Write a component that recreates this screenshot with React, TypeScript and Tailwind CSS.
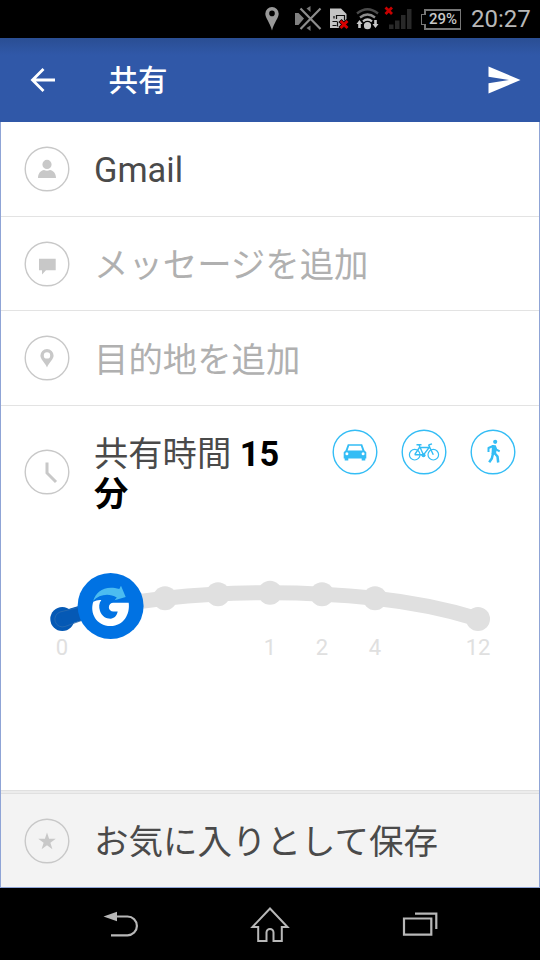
import { ReactNode } from "react";

const TRACK =
  "M62 619C96 608.5 131 602 165 598.3S235 592.7 270 592.7S340 594.5 375 598.3S444 608.5 478 619";

const STOPS = [
  { x: 165, y: 598.3 },
  { x: 218, y: 594.2 },
  { x: 270, y: 592.7, label: "1" },
  { x: 322, y: 594.2, label: "2" },
  { x: 375, y: 598.3, label: "4" },
  { x: 478, y: 619, label: "12" },
];

function CircleIcon({ children }: { children: ReactNode }) {
  return (
    <svg
      className="w-[46px] h-[46px] shrink-0"
      viewBox="-0.5 -0.5 46 46"
      fill="currentColor"
    >
      <circle
        cx="22.5"
        cy="22.5"
        r="21.8"
        fill="none"
        stroke="currentColor"
        strokeWidth="1.4"
      />
      {children}
    </svg>
  );
}

function StatusBar() {
  return (
    <div className="h-[38px] bg-black flex items-center justify-end pr-[9px] text-[#b8b8b8]">
      <svg className="w-[155px] h-[38px]" viewBox="260 0 155 38">
        <path
          fill="#999"
          fillRule="evenodd"
          d="M272 7a6.700 6.700 0 0 0-6.700 6.700c0 4.300 4.500 8.300 6.700 16.800c2.200-8.500 6.700-12.500 6.700-16.800A6.700 6.700 0 0 0 272 7zm0 3.600a2.800 2.800 0 1 1 0 5.600a2.800 2.800 0 0 1 0-5.600z"
        />
        <path fill="#808080" d="M295 13h3.500l5.500 5.500-5.500 6.500h-3.500z" />
        <path
          d="M300.500 8.500l20 20.500M320.500 8.500L300.500 29"
          stroke="#000"
          strokeWidth="4"
        />
        <path
          d="M300.500 8.500l20 20.500M320.500 8.500L300.500 29"
          stroke="#8c8c8c"
          strokeWidth="2.200"
        />
        <path fill="#777" d="M310.500 6v6l-4-3.500zM310.500 31v-5.500l-4 2.500z" />
        <path fill="#c4c4c4" d="M330 8.500h11l5.500 5.500v14h-16.500z" />
        <path
          d="M332.500 21.500h4.500M337.500 21.500v5M341.500 15.500h-5v3.500M341.500 15.500h3v5M332.500 25.500h4M334 16v2.500"
          stroke="#111"
          strokeWidth="1.200"
          fill="none"
        />
        <path d="M340 20.500l8 8M348 20.500l-8 8" stroke="#000" strokeWidth="4.500" />
        <path d="M340.500 21l7 7M347.500 21l-7 7" stroke="#d80000" strokeWidth="2.800" />
        <g fill="none" strokeWidth="2.300">
          <path d="M357 13.500q10.500-8.500 21 0" stroke="#4a4a4a" />
          <path d="M360 17.500q7.500-6 15 0" stroke="#8c8c8c" />
          <path d="M363 21.300q4.500-3.500 9 0" stroke="#c4c4c4" />
        </g>
        <circle cx="367.500" cy="25.700" r="3.600" fill="#c8c8c8" />
        <path
          fill="#c8c8c8"
          d="M359.500 20l3 4h-1.700v4h-2.600v-4h-1.700zM375.500 28l3-4h-1.700v-4h-2.600v4h-1.700z"
        />
        <path d="M385.500 7.500l6.500 6.500M392 7.500L385.500 14" stroke="#c80000" strokeWidth="2.800" />
        <path
          fill="#292929"
          d="M389 24.500h4.500v4.500h-4.500zM395 20.500h4.500v8.500h-4.500zM401 15h4.500v14h-4.500zM407 9h4.500v20h-4.500z"
        />
      </svg>
      <div className="relative ml-[9px] w-[37px] h-[21px] border-2 border-[#777] border-r-[1px] flex items-center justify-center text-[15px] font-medium text-[#c8c8c8]">
        <span className="absolute -left-[5px] top-[3px] w-[5px] h-[11px] border border-r-0 border-[#777] bg-black" />
        29%
      </div>
      <span className="ml-[10px] w-[60px] text-[24px] leading-none">20:27</span>
    </div>
  );
}

function Row({
  icon,
  label,
  className,
  labelClassName = "pt-[3px]",
}: {
  icon: ReactNode;
  label: string;
  className: string;
  labelClassName?: string;
}) {
  return (
    <div className={`flex items-center pl-[23px] border-b border-[#e3e3e3] ${className}`}>
      <div className="text-[#c8c8c8]">
        <CircleIcon>{icon}</CircleIcon>
      </div>
      <span className={`ml-6 text-[34.400px] leading-10 ${labelClassName}`}>{label}</span>
    </div>
  );
}

function TravelModes() {
  return (
    <div className="flex gap-[23px] text-[#34bdf5]">
      <CircleIcon>
        <path
          fillRule="evenodd"
          d="M15.300 14.800h14.400l2.300 6.300 1.800 1.700v6.200h-1v2h-3.600v-2H15.800v2h-3.600v-2h-1v-6.200l1.800-1.700zM16.700 16.200l-1.600 4.700h14.800l-1.600-4.700zM14.400 22.700a1.500 1.500 0 1 0 0 3a1.500 1.500 0 0 0 0-3zM30.600 22.700a1.500 1.500 0 1 0 0 3a1.500 1.500 0 0 0 0-3z"
        />
      </CircleIcon>
      <CircleIcon>
        <g fill="none" stroke="currentColor" strokeWidth="1.200">
          <circle cx="13.200" cy="25.200" r="5.300" />
          <circle cx="31.800" cy="25.200" r="5.300" />
          <path
            strokeWidth="1.400"
            d="M13.200 25.200l4.700-7.200h9.800L22 25.500 17.500 15.500M13.200 25.200H22M31.800 25.200L27 15.200M15 15.200h5M27 15.500l3.500-1.200"
          />
        </g>
        <circle cx="22" cy="25.800" r="2" />
      </CircleIcon>
      <CircleIcon>
        <circle cx="24.700" cy="12.300" r="2.100" />
        <path
          fill="none"
          stroke="currentColor"
          strokeLinejoin="round"
          strokeWidth="2"
          d="M18 22.500v-4l4.500-2 3 3.300 3.700 2"
        />
        <path
          fill="none"
          stroke="currentColor"
          strokeLinejoin="round"
          strokeWidth="2.500"
          d="M24 23.500l3 3.500 .7 6M22.500 24l-1.200 5-2.600 3.700"
        />
        <path d="M21.500 15.500l3.700.3 1.200 3-1 6.200-4.400-.5z" />
      </CircleIcon>
    </div>
  );
}

function TimeSlider() {
  return (
    <svg className="block w-[538px] h-[110px]" viewBox="1 560 538 110">
      <path d={TRACK} fill="none" stroke="#e0e0e0" strokeWidth="15" />
      {STOPS.map((s) => (
        <circle key={s.x} cx={s.x} cy={s.y} r="12" fill="#e0e0e0" />
      ))}
      <circle cx="62.300" cy="619" r="12" fill="#0559b5" />
      <path d="M62 619Q85 611 110 606" stroke="#0559b5" strokeWidth="15" fill="none" />
      <path
        d="M84 606L60 612a7.500 7.500 0 0 0 5 14.500l19-7"
        stroke="#2b6cb2"
        strokeWidth=".8"
        fill="none"
      />
      <circle cx="110.600" cy="606" r="33" fill="#0072e3" />
      <path
        fill="#fff"
        d="M93.300 601.700Q97 599.600 101.300 600C98.800 603 98.800 607 100 611C102 616.500 106 618.700 110.500 618.700C114 618.700 116.800 616 117.700 611.600H113.300A4.400 4.400 0 0 1 113.300 602.700H128.700C130.300 614 123.500 626 110.600 626C96 626 89.500 612.500 93.300 601.700z"
      />
      <path
        fill="#4cbcf0"
        d="M93.200 600.800C96 591.500 105 584.800 119.300 589L121 585.800L125.700 596.900L114.600 600.200L116.800 597.600C109 592.800 99 594.500 93.200 600.800z"
      />
      <g fill="#e0e0e0" fontSize="22" textAnchor="middle">
        <text x="62" y="655">
          0
        </text>
        {STOPS.filter((s) => s.label).map((s) => (
          <text key={s.x} x={s.x} y="655">
            {s.label}
          </text>
        ))}
      </g>
    </svg>
  );
}

function NavBar() {
  return (
    <div className="h-[72px] bg-black flex items-center justify-between px-[100px]">
      <svg className="w-10 h-10" viewBox="100 904 40 40">
        <path fill="#b8b8b8" d="M103.500 916.500l13.500-4.700v9.400z" />
        <path
          d="M115 916.500h12.500a9.300 9.300 0 0 1 0 18.800H111"
          fill="none"
          stroke="#b8b8b8"
          strokeWidth="2.200"
        />
      </svg>
      <svg className="w-10 h-10" viewBox="250 904 40 40">
        <path
          d="M270 908.500l-17.500 18.500h5.700v14h8.300v-8.500a3.500 3.500 0 0 1 7 0v8.500h8.300v-14h5.700z"
          fill="none"
          stroke="#b8b8b8"
          strokeWidth="2"
        />
      </svg>
      <svg className="w-10 h-10" viewBox="400 904 40 40">
        <path
          d="M404 918.500h27.300v16.200H404zM415 913.700h21.300v15.300"
          fill="none"
          stroke="#b8b8b8"
          strokeWidth="2.200"
        />
      </svg>
    </div>
  );
}

export default function App() {
  return (
    <div className="w-[540px] h-[960px] flex flex-col bg-black font-['Roboto','Noto_Sans_CJK_JP',sans-serif] text-[#4a4a4a]">
      <StatusBar />
      <header className="h-[84px] flex items-center bg-linear-to-b from-[#2a4e93] to-[#3058a8] to-20% text-white pl-[30px] pr-[19px]">
        <svg className="w-[26px] h-[26px]" viewBox="0 0 26 26">
          <path
            d="M25 13H2.500M13.500 2L2.500 13l11 11"
            fill="none"
            stroke="currentColor"
            strokeWidth="2.800"
          />
        </svg>
        <h1 className="ml-[52.500px] pt-[3px] text-[29.500px] font-medium leading-none">共有</h1>
        <svg className="ml-auto w-[33px] h-[28px]" viewBox="0 0 33 28">
          <path fill="currentColor" d="M.500.500L32.500 14 .500 27.500V17.200L21 14 .500 10.800z" />
        </svg>
      </header>

      <main className="flex-1 flex flex-col bg-white border-x border-[#8fa4d6]">
        <Row
          className="h-[95px]"
          labelClassName="pt-px"
          label="Gmail"
          icon={
            <path d="M22.500 13.300a4.600 4.600 0 1 1 0 9.200a4.600 4.600 0 0 1 0-9.200zM13.500 31.500c0-5 3-7.500 6-8q3 1.500 6 0c3 .500 6 3 6 8z" />
          }
        />
        <Row
          className="h-[94px] text-[#b0b0b0]"
          label="メッセージを追加"
          icon={<path d="M14.500 17.300h16.700v11.500H21.500l-4 4.300v-4.300h-3z" />}
        />
        <Row
          className="h-[95px] text-[#b0b0b0]"
          label="目的地を追加"
          icon={
            <path
              fillRule="evenodd"
              d="M22.500 13.500a6.600 6.600 0 0 0-6.600 6.600c0 4 4.500 7 6.600 11.800c2.100-4.800 6.600-7.800 6.600-11.800a6.600 6.600 0 0 0-6.600-6.600zm0 3.200a3.200 3.200 0 1 1 0 6.400a3.200 3.200 0 0 1 0-6.400z"
            />
          }
        />

        <section className="flex-1">
          <div className="flex h-[154px] px-[23px] pt-[23px]">
            <div className="pt-5 text-[#c8c8c8]">
              <CircleIcon>
                <path
                  d="M22.500 13v10.500l9 9"
                  fill="none"
                  stroke="currentColor"
                  strokeWidth="3"
                />
              </CircleIcon>
            </div>
            <p className="ml-6 mt-[5px] w-[215px] text-[34.300px] leading-10">
              共有時間 <b className="text-black">15</b>
              <br />
              <b className="text-black">分</b>
            </p>
            <div className="ml-auto">
              <TravelModes />
            </div>
          </div>
          <TimeSlider />
        </section>

        <footer className="h-[98px] flex flex-col border-b border-[#8fa4d6]">
          <div className="h-1 bg-[#ececec] border-y border-[#e0e0e0]" />
          <div className="flex-1 flex items-center bg-[#f3f3f3] pl-[23px]">
            <div className="text-[#c8c8c8]">
              <CircleIcon>
                <path d="M22.500 14l2.100 6.300h6.700l-5.400 4 2 6.400-5.400-3.900-5.400 3.900 2-6.400-5.400-4h6.700z" />
              </CircleIcon>
            </div>
            <span className="ml-6 pt-[3px] text-[34.500px] leading-10">
              お気に入りとして保存
            </span>
          </div>
        </footer>
      </main>
      <NavBar />
    </div>
  );
}
